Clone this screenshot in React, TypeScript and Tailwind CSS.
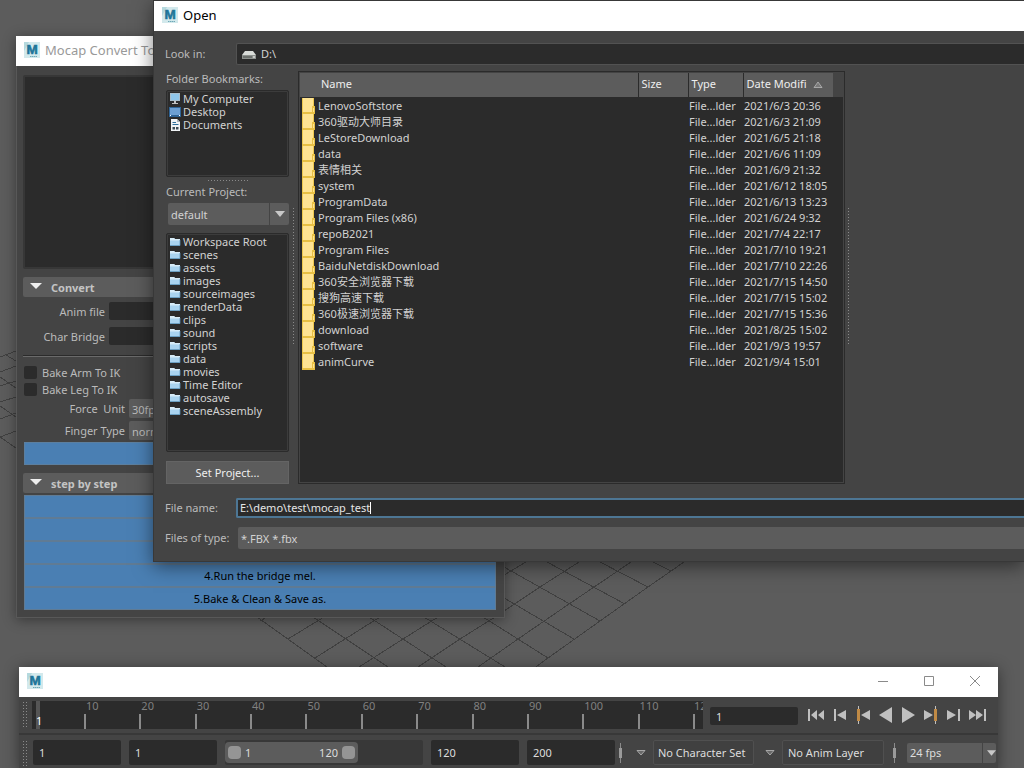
import { useState } from "react";
import type { ReactNode } from "react";

const bookmarks = ["My Computer", "Desktop", "Documents"];

const projectFolders = [
  "Workspace Root",
  "scenes",
  "assets",
  "images",
  "sourceimages",
  "renderData",
  "clips",
  "sound",
  "scripts",
  "data",
  "movies",
  "Time Editor",
  "autosave",
  "sceneAssembly",
];

const files = [
  { name: "LenovoSoftstore", date: "2021/6/3 20:36" },
  { name: "360驱动大师目录", date: "2021/6/3 21:09" },
  { name: "LeStoreDownload", date: "2021/6/5 21:18" },
  { name: "data", date: "2021/6/6 11:09" },
  { name: "表情相关", date: "2021/6/9 21:32" },
  { name: "system", date: "2021/6/12 18:05" },
  { name: "ProgramData", date: "2021/6/13 13:23" },
  { name: "Program Files (x86)", date: "2021/6/24 9:32" },
  { name: "repoB2021", date: "2021/7/4 22:17" },
  { name: "Program Files", date: "2021/7/10 19:21" },
  { name: "BaiduNetdiskDownload", date: "2021/7/10 22:26" },
  { name: "360安全浏览器下载", date: "2021/7/15 14:50" },
  { name: "搜狗高速下载", date: "2021/7/15 15:02" },
  { name: "360极速浏览器下载", date: "2021/7/15 15:36" },
  { name: "download", date: "2021/8/25 15:02" },
  { name: "software", date: "2021/9/3 19:57" },
  { name: "animCurve", date: "2021/9/4 15:01" },
];

const ticks = [10, 20, 30, 40, 50, 60, 70, 80, 90, 100, 110];

const steps = [
  { id: 1, label: "" },
  { id: 2, label: "" },
  { id: 3, label: "" },
  { id: 4, label: "4.Run the bridge mel." },
  { id: 5, label: "5.Bake & Clean & Save as." },
];

function MayaLogo() {
  return (
    <svg width="16" height="16" viewBox="0 0 16 16" className="shrink-0" aria-hidden="true">
      <rect width="16" height="16" fill="#d3e9ec" />
      <path d="M0 0H5L0 9Z" fill="#b5d9de" />
      <text
        x="8"
        y="11.5"
        textAnchor="middle"
        fontFamily="Liberation Sans, sans-serif"
        fontWeight="700"
        fontSize="13.5"
        fill="#1f7599"
        stroke="#1f7599"
        strokeWidth=".6"
      >
        M
      </text>
      <path d="M6 14.5H13" stroke="#6fa9b8" strokeWidth="1" strokeDasharray="1.5 .5" />
    </svg>
  );
}

function TitleBar({ title, muted, children }: { title?: string; muted?: boolean; children?: ReactNode }) {
  return (
    <header className="flex h-[30px] items-center bg-white px-2 pb-0.5">
      <MayaLogo />
      <h1 className={muted ? "ml-[5px] text-[13px] text-[#999999]" : "ml-[5px] text-[13px] text-black"}>{title}</h1>
      {children}
    </header>
  );
}

function ViewportGrid() {
  return (
    <svg
      className="absolute top-0 left-0"
      width="1024"
      height="768"
      viewBox="0 0 1024 768"
      fill="none"
      stroke="#404040"
      shapeRendering="crispEdges"
      aria-hidden="true"
    >
      <path d="M684 562L648 587L600 621L548 658L536 667M653 562L671 571M600 562L648 587M547 562L625 604M504 567L600 621M504 598L574 639M483 617L548 658M424 617L505 667M369 617L446 667M313 617L388 667M257 617L327 667" />
      <path d="M526 562L504 575M579 562L540 587L504 611M631 562L569 604L518 639L478 667M495 617L460 639L418 667M438 617L403 639L359 667M380 617L345 639L315 658M324 617L288 639M267 617L260 621" />
      <path d="M0 357L16 351M0 372L16 366M0 386L16 381M0 402L16 397M0 419L16 413M0 437L16 431M6 355L16 361M0 377L16 388M0 406L16 417M0 437L16 448" />
    </svg>
  );
}

function BookmarkIcon({ name }: { name: string }) {
  return (
    <svg width="12" height="12" viewBox="0 0 12 12" className="shrink-0" aria-hidden="true">
      {name === "My Computer" && (
        <>
          <path d="M1 0H11V8H1Z" fill="#a9bfcd" />
          <path d="M2 1H10V7H2Z" fill="#8fc6ea" />
          <path d="M5 8H7V10H9V11H3V10H5Z" fill="#c0c0c0" />
        </>
      )}
      {name === "Desktop" && (
        <>
          <path d="M0 1H12V11H0Z" fill="#2f6496" />
          <path d="M1 2H11V9H1Z" fill="#6c9fd2" />
          <path d="M1 9H2V10H1ZM10 9H11V10H10Z" fill="#fff" />
        </>
      )}
      {name === "Documents" && (
        <>
          <path d="M2 0H8L11 3V12H2Z" fill="#f0f3f5" />
          <path d="M8 0V3H11" fill="#a8b4bc" />
          <path d="M3.5 3.5H7M3.5 5.5H9.5" stroke="#2b6d9a" />
          <path d="M3.5 8H6V10.5H3.5ZM7 8H9.5V10.5H7Z" fill="#3c4b55" />
        </>
      )}
    </svg>
  );
}

function FolderIcon() {
  return (
    <svg width="12" height="10" viewBox="0 0 12 10" className="shrink-0" aria-hidden="true">
      <path d="M1 1H5L6 2H11V9H1Z" fill="#a9d3ef" />
      <path d="M1 1H5L6 2H11V3.5H1Z" fill="#d7ecf8" />
      <path d="M1 8.5H11V3" fill="none" stroke="#5d93b8" strokeWidth=".8" />
    </svg>
  );
}

function FileFolderIcon() {
  return (
    <svg width="13" height="16" viewBox="0 0 13 16" className="shrink-0" aria-hidden="true">
      <path d="M0 0H12V16H0Z" fill="#ffe493" />
      <path d="M.5 0V16M11.5 0V9" stroke="#efc94f" fill="none" />
      <path d="M10 8H13V16H10Z" fill="#e8c044" />
      <path d="M11 10H12V14H11Z" fill="#ffe493" />
      <path d="M0 14.5H11M0 15.5H12" stroke="#e8c044" />
    </svg>
  );
}

function DownArrow({ className }: { className?: string }) {
  return (
    <svg width="10" height="6" viewBox="0 0 10 6" className={className} aria-hidden="true">
      <path d="M0 0H10L5 6Z" fill="#c8c8c8" />
    </svg>
  );
}

function SmallDrop() {
  return (
    <svg width="10" height="6" viewBox="0 0 10 6" aria-hidden="true">
      <path d="M1 .5H9L5 5Z" fill="#686868" stroke="#b0b0b0" strokeWidth=".9" />
    </svg>
  );
}

function SliderPin() {
  return (
    <svg width="3" height="20" viewBox="0 0 3 20" className="shrink-0" aria-hidden="true">
      <path d="M1 0H2V20H1Z" fill="#8b8b8b" />
      <path d="M0 5H3V15H0Z" fill="#9a9a9a" />
    </svg>
  );
}

function Section({ title }: { title: string }) {
  return (
    <h2 className="flex h-5 items-center rounded-xs bg-[#5c5c5c] pt-0.5 pl-[7px] text-[11px] font-bold text-[#c4c4c4]">
      <svg width="12" height="6" viewBox="0 0 12 6" className="mr-[9px] mb-1" aria-hidden="true">
        <path d="M0 0H12L6 6Z" fill="#eeeeee" />
      </svg>
      {title}
    </h2>
  );
}

function MocapWindow() {
  return (
    <section className="absolute top-9 left-4 w-[489px] bg-[#444444] shadow-[0_2px_12px_rgba(0,0,0,0.4)]">
      <TitleBar title="Mocap Convert Tool" muted />
      <div className="flex flex-col border border-t-0 border-[#585858] px-1.5 pt-[9px] pb-[7px]">
        <div className="h-[194px] rounded-xs border-2 border-[#373737] bg-[#2b2b2b]" />
        <div className="mt-2 mb-[5px]">
          <Section title="Convert" />
        </div>
        <div className="flex flex-col gap-[7px]">
          <div className="flex items-center gap-1">
            <label htmlFor="anim" className="w-[82px] pt-0.5 text-right">Anim file</label>
            <input id="anim" className="h-[18px] min-w-0 flex-1 rounded-xs bg-[#2b2b2b] px-1" />
          </div>
          <div className="flex items-center gap-1">
            <label htmlFor="bridge" className="w-[82px] pt-0.5 text-right">Char Bridge</label>
            <input id="bridge" className="h-[18px] min-w-0 flex-1 rounded-xs bg-[#2b2b2b] px-1" />
          </div>
        </div>
        <hr className="mt-[10px] mb-[9px] h-0.5 border-t border-b border-t-[#2b2b2b] border-b-[#6a6a6a]" />
        <div className="flex flex-col gap-1">
          {["Bake Arm To IK", "Bake Leg To IK"].map((text) => (
            <label key={text} className="flex h-[13px] items-center gap-[5px] pl-px">
              <input type="checkbox" className="size-[13px] appearance-none rounded-xs bg-[#2b2b2b] checked:bg-[#5285a6]" />
              {text}
            </label>
          ))}
        </div>
        <div className="mt-[3px] flex flex-col gap-[3px]">
          <div className="flex items-center gap-1">
            <label htmlFor="unit" className="w-[102px] text-right whitespace-pre">Force  Unit</label>
            <select id="unit" className="h-[19px] w-32 appearance-none rounded-xs bg-[#5c5c5c] pt-0.5 pl-[3px]">
              <option>30fps</option>
            </select>
          </div>
          <div className="flex items-center gap-1">
            <label htmlFor="finger" className="w-[102px] text-right">Finger Type</label>
            <select id="finger" className="h-[19px] w-32 appearance-none rounded-xs bg-[#5c5c5c] pt-0.5 pl-[3px]">
              <option>normal</option>
            </select>
          </div>
        </div>
        <button type="button" aria-label="Convert" className="mr-0.5 ml-px mt-0.5 mb-2 h-[23px] border border-[#5c7f9f] bg-[#4a7fb3]" />
        <Section title="step by step" />
        <div className="mt-0.5 mr-0.5 ml-px flex flex-col">
          {steps.map((step) => (
            <button
              key={step.id}
              type="button"
              aria-label={step.label || `Step ${step.id}`}
              className="h-[23px] border border-[#607b94] bg-[#4a7fb3] text-center text-black"
            >
              {step.label}
            </button>
          ))}
        </div>
      </div>
    </section>
  );
}

function Sidebar() {
  return (
    <div className="flex w-[123px] flex-col">
      <h2 className="mb-[3px] leading-4">Folder Bookmarks:</h2>
      <ul className="h-[87px] rounded-xs border border-[#2b2b2b] bg-[#2b2b2b] pt-px pl-0.5 inset-ring inset-ring-[#3c3c3c]">
        {bookmarks.map((name) => (
          <li key={name} className="flex h-[13px] items-center gap-0.5 leading-[13px] text-[#d2d2d2]">
            <BookmarkIcon name={name} />
            {name}
          </li>
        ))}
      </ul>
      <div className="mx-auto my-[3px] h-px w-10 bg-[repeating-linear-gradient(90deg,#8a8a8a_0_1px,transparent_1px_3px)]" />
      <label htmlFor="project" className="mb-[3px] leading-4">Current Project:</label>
      <div className="relative ml-0.5">
        <select id="project" className="h-[22px] w-full appearance-none rounded-xs bg-[#5c5c5c] pt-0.5 pl-[3px] text-[#d2d2d2]">
          <option>default</option>
        </select>
        <span className="pointer-events-none absolute top-0 right-0 flex h-full w-5 items-center justify-center border-l border-[#444444]">
          <DownArrow />
        </span>
      </div>
      <ul className="mt-2 h-[219px] rounded-xs border border-[#2b2b2b] bg-[#2b2b2b] pt-px pl-0.5 inset-ring inset-ring-[#3c3c3c]">
        {projectFolders.map((name) => (
          <li key={name} className="flex h-[13px] items-center gap-0.5 leading-[13px] text-[#d2d2d2]">
            <FolderIcon />
            {name}
          </li>
        ))}
      </ul>
      <button type="button" className="mt-[9px] h-[23px] border border-[#646464] bg-[#5c5c5c] text-[#eeeeee]">
        Set Project...
      </button>
    </div>
  );
}

function FileTable() {
  return (
    <div className="w-[547px] border border-[#2b2b2b] bg-[#2b2b2b] p-px inset-ring inset-ring-[#444444]">
      <table className="w-full table-fixed border-collapse text-left">
        <colgroup>
          <col className="w-[338px]" />
          <col className="w-[50px]" />
          <col className="w-[55px]" />
          <col className="w-[90px]" />
          <col />
        </colgroup>
        <thead>
          <tr className="h-6 bg-[#5c5c5c] text-[#eeeeee]">
            <th className="border-r border-[#2b2b2b] pb-0.5 pl-[21px] font-normal">Name</th>
            <th className="border-r border-[#2b2b2b] pb-0.5 pl-[3px] font-normal">Size</th>
            <th className="border-r border-[#2b2b2b] pb-0.5 pl-[3px] font-normal">Type</th>
            <th className="pb-0.5 pl-[3px] font-normal">
              <span className="flex items-center gap-1.5 whitespace-nowrap">
                Date Modifi
                <svg width="10" height="7" viewBox="0 0 10 7" aria-hidden="true">
                  <path d="M1 6.5L5 1L9 6.5Z" fill="#7a7a7a" stroke="#b8b8b8" strokeWidth=".8" />
                </svg>
              </span>
            </th>
            <td className="bg-[#444444]" />
          </tr>
          <tr className="h-px" />
        </thead>
        <tbody>
          {files.map((file) => (
            <tr key={file.name} className="h-4 leading-4 whitespace-nowrap text-[#d2d2d2]">
              <td className="p-0 pl-0.5">
                <span className="flex h-4 items-center gap-[3px]">
                  <FileFolderIcon />
                  {file.name}
                </span>
              </td>
              <td />
              <td className="p-0 pl-px">File...lder</td>
              <td className="p-0 pl-px">{file.date}</td>
              <td />
            </tr>
          ))}
        </tbody>
      </table>
    </div>
  );
}

function OpenDialog() {
  const [fileName, setFileName] = useState("E:\\demo\\test\\mocap_test");

  return (
    <section
      role="dialog"
      aria-label="Open"
      className="absolute top-0 right-0 left-[153px] border border-r-0 border-[#383838] bg-[#444444] shadow-[0_4px_18px_rgba(0,0,0,0.5)]"
    >
      <TitleBar title="Open" />
      <div className="flex flex-col pt-3 pb-3 pl-[11px]">
        <div className="flex items-center">
          <label htmlFor="look" className="w-[71px]">Look in:</label>
          <div className="relative flex-1">
            <select
              id="look"
              className="h-[22px] w-full appearance-none rounded-l-xs border border-r-0 border-[#525252] bg-[#2b2b2b] pl-6 text-[#d2d2d2]"
            >
              <option>D:\</option>
            </select>
            <svg width="14" height="10" viewBox="0 0 14 10" className="pointer-events-none absolute top-2 left-1.5" aria-hidden="true">
              <path d="M3 0H11L14 4H0Z" fill="#d9dcd8" />
              <path d="M0 4H14V8H0Z" fill="#8d918d" />
              <path d="M1 6H10" stroke="#4b4f4b" />
              <path d="M11 6H13" stroke="#fff" />
            </svg>
          </div>
        </div>
        <div className="mt-1.5 flex pl-px">
          <Sidebar />
          <div className="mt-[137px] ml-1 h-[138px] w-px bg-[repeating-linear-gradient(180deg,#8a8a8a_0_1px,transparent_1px_3px)]" />
          <div className="ml-1 flex">
            <FileTable />
          </div>
          <div className="mt-[137px] ml-[3px] h-[138px] w-px bg-[repeating-linear-gradient(180deg,#8a8a8a_0_1px,transparent_1px_3px)]" />
        </div>
        <div className="mt-[14px] flex items-center">
          <label htmlFor="filename" className="w-[71px]">File name:</label>
          <div className="flex h-5 flex-1 items-center rounded-l-xs border-2 border-r-0 border-[#4d7694] bg-[#2b2b2b] pl-0.5">
            <input
              id="filename"
              value={fileName}
              onChange={(e) => setFileName(e.target.value)}
              className="field-sizing-content bg-transparent text-[#e6e6e6] outline-none"
            />
            <span className="h-3 w-px bg-white" />
          </div>
        </div>
        <div className="mt-[9px] flex items-center">
          <label htmlFor="filetype" className="w-[73px]">Files of type:</label>
          <select id="filetype" className="h-[22px] flex-1 appearance-none rounded-l-xs bg-[#5c5c5c] pt-0.5 pl-[3px] text-[#d2d2d2]">
            <option>*.FBX *.fbx</option>
          </select>
        </div>
      </div>
    </section>
  );
}

const controls = [
  { label: "Go to start", width: 17, gray: "M0 1H2V13H0ZM9 2V12L3 7ZM16 2V12L10 7Z" },
  { label: "Step back frame", width: 13, gray: "M0 1H2V13H0ZM12 2V12L3 7Z" },
  { label: "Step back key", width: 13, gray: "M13 2V12L4 7ZM1 -2H2V16H1Z", orange: "M0 1H3V13H0Z" },
  { label: "Play backwards", width: 13, gray: "M13 -1V15L0 7Z" },
  { label: "Play forwards", width: 13, gray: "M0 -1V15L13 7Z" },
  { label: "Step forward key", width: 13, gray: "M0 2V12L9 7ZM11 -2H12V16H11Z", orange: "M10 1H13V13H10Z" },
  { label: "Step forward frame", width: 13, gray: "M0 2V12L9 7ZM11 1H13V13H11Z" },
  { label: "Go to end", width: 17, gray: "M0 2V12L7 7ZM7 2V12L14 7ZM15 1H17V13H15Z" },
];

function Grip() {
  return (
    <div className="ml-[3px] w-[5px] bg-[radial-gradient(circle,#8a8a8a_0_1px,transparent_1px)] bg-[size:3px_3px]" />
  );
}

function TimeField({ label, value }: { label: string; value: string }) {
  return (
    <input
      aria-label={label}
      defaultValue={value}
      className="h-[25px] w-[88px] rounded-xs bg-[#2b2b2b] pl-1.5 text-[#dddddd]"
    />
  );
}

function TimelineWindow() {
  return (
    <section className="absolute top-[667px] right-[26px] left-[19px] bg-[#444444] shadow-[0_2px_14px_rgba(0,0,0,0.45)]">
      <TitleBar>
        <div className="mr-[9px] ml-auto flex gap-[34px] text-[#8a8a8a]">
          <button type="button" aria-label="Minimize">
            <svg width="12" height="12" viewBox="0 0 12 12"><path d="M1 6.5H11" stroke="currentColor" /></svg>
          </button>
          <button type="button" aria-label="Maximize">
            <svg width="12" height="12" viewBox="0 0 12 12"><path d="M1.5 1.5H10.5V10.5H1.5Z" fill="none" stroke="currentColor" /></svg>
          </button>
          <button type="button" aria-label="Close">
            <svg width="12" height="12" viewBox="0 0 12 12"><path d="M1 1L11 11M11 1L1 11" stroke="currentColor" /></svg>
          </button>
        </div>
      </TitleBar>
      <div className="flex h-[38px] border-b-2 border-[#383838] pt-1">
        <div className="flex h-7">
          <Grip />
        </div>
        <div className="ml-[5px] flex h-7 min-w-0 flex-1 bg-[#2b2b2b] text-[#808080]">
          <div className="w-[52px] shrink-0 pl-1">
            <div className="flex h-7 w-1 items-end bg-[#555555] leading-4 text-white">1</div>
          </div>
          {ticks.map((tick) => (
            <div key={tick} className="flex min-w-0 flex-1 flex-col justify-between">
              <span className="pl-0.5 leading-[10px]">{tick}</span>
              <span className="h-[15px] w-0.5 bg-[#8a8a8a]" />
            </div>
          ))}
          <div className="flex w-2.5 shrink-0 flex-col justify-between overflow-hidden">
            <span className="pl-px leading-[10px]">12</span>
            <span className="h-[15px] w-0.5 bg-[#8a8a8a]" />
          </div>
        </div>
        <input
          aria-label="Current frame"
          defaultValue="1"
          className="mt-1.5 ml-[7px] h-[18px] w-[88px] rounded-xs bg-[#2b2b2b] pl-1.5 text-[#dddddd]"
        />
        <div className="mt-[5px] mr-3 ml-2.5 flex h-[18px] w-[178px] items-center justify-between">
          {controls.map((control) => (
            <button key={control.label} type="button" aria-label={control.label}>
              <svg width={control.width} height="14" viewBox={`0 0 ${control.width} 14`} className="overflow-visible">
                <path d={control.gray} fill="#c0c0c0" />
                {control.orange && <path d={control.orange} fill="#c08a45" />}
              </svg>
            </button>
          ))}
        </div>
      </div>
      <div className="flex h-[36px] pt-[5px]">
        <div className="flex h-7 pr-[6px]">
          <Grip />
        </div>
        <div className="flex h-[25px] flex-1 items-center gap-2">
          <TimeField label="Animation start" value="1" />
          <TimeField label="Playback start" value="1" />
          <div className="flex h-[25px] min-w-0 flex-1 items-center rounded-xs bg-[#383838]">
            <div className="flex h-[21px] w-[133px] items-center justify-between rounded-sm bg-[#5c5c5c] px-[3px] text-[#dddddd]">
              <span className="flex items-center gap-1">
                <span className="size-[13px] rounded-sm bg-[#959595]" />1
              </span>
              <span className="flex items-center gap-1">
                120<span className="size-[13px] rounded-sm bg-[#959595]" />
              </span>
            </div>
          </div>
          <TimeField label="Playback end" value="120" />
          <TimeField label="Animation end" value="200" />
        </div>
        <div className="mr-0.5 ml-1 flex h-[25px] items-center">
          <SliderPin />
          <button type="button" aria-label="Character set menu" className="mr-[7px] ml-3.5">
            <SmallDrop />
          </button>
          <button type="button" className="h-[25px] w-[101px] rounded-xs border border-[#505050] bg-[#404040] pl-1 text-left whitespace-nowrap text-[#dddddd]">
            No Character Set
          </button>
          <button type="button" aria-label="Anim layer menu" className="mr-[7px] ml-[11px]">
            <SmallDrop />
          </button>
          <button type="button" className="mr-[9px] h-[25px] w-[102px] rounded-xs border border-[#505050] bg-[#404040] pl-[5px] text-left text-[#dddddd]">
            No Anim Layer
          </button>
          <SliderPin />
          <div className="relative ml-[11px] w-[89px]">
            <select aria-label="Frame rate" className="h-5 w-full appearance-none rounded-xs bg-[#5c5c5c] pl-[3px] text-[#dddddd]">
              <option>24 fps</option>
            </select>
            <span className="pointer-events-none absolute top-0 right-0 flex h-full w-3.5 items-center border-l border-[#444444] pl-1">
              <DownArrow />
            </span>
          </div>
        </div>
      </div>
    </section>
  );
}

export default function App() {
  return (
    <main className="relative h-screen overflow-hidden bg-[#5c5c5c] font-['Noto_Sans','Noto_Sans_CJK_SC',sans-serif] text-[11px] leading-4 text-[#bbbbbb]">
      <ViewportGrid />
      <MocapWindow />
      <TimelineWindow />
      <OpenDialog />
    </main>
  );
}
